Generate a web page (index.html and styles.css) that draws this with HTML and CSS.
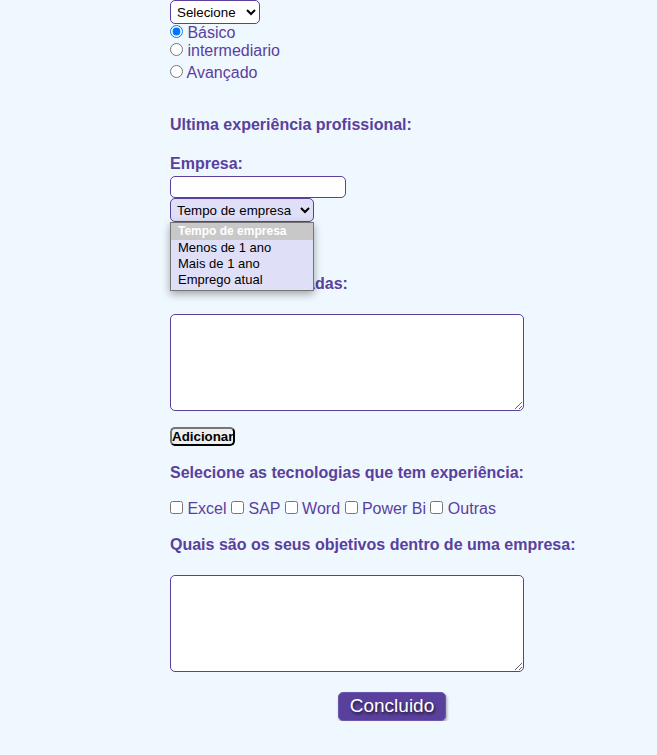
FILE: index.html
```html
<!DOCTYPE html>
<html lang="pt-BR">
<head>
<meta charset="utf-8">
<title>Cadastro</title>
<link rel="stylesheet" href="styles.css">
</head>
<body>
<form class="form">
  <select class="field select level" aria-label="Nível"><option>Selecione</option></select>
  <div class="choices">
    <label class="choice"><input type="radio" name="nivel" checked> Básico</label>
    <label class="choice"><input type="radio" name="nivel"> intermediario</label>
    <label class="choice choice-last"><input type="radio" name="nivel"> Avançado</label>
  </div>

  <h2 class="title">Ultima experiência profissional:</h2>
  <label class="title company-label" for="empresa">Empresa:</label>
  <input class="field company" id="empresa" type="text">
  <div class="dropdown">
    <select class="field select tenure" aria-label="Tempo de empresa"><option>Tempo de empresa</option></select>
    <ul class="menu">
      <li class="option selected">Tempo de empresa</li>
      <li class="option">Menos de 1 ano</li>
      <li class="option">Mais de 1 ano</li>
      <li class="option">Emprego atual</li>
    </ul>
  </div>

  <label class="title activities-label" for="atividades">Atividades executadas:</label>
  <textarea class="field area" id="atividades"></textarea>
  <button class="add" type="button">Adicionar</button>

  <h2 class="title tech-title">Selecione as tecnologias que tem experiência:</h2>
  <div class="techs">
    <label><input type="checkbox"> Excel</label>
    <label><input type="checkbox"> SAP</label>
    <label><input type="checkbox"> Word</label>
    <label><input type="checkbox"> Power Bi</label>
    <label><input type="checkbox"> Outras</label>
  </div>

  <label class="title goals-label" for="objetivos">Quais são os seus objetivos dentro de uma empresa:</label>
  <textarea class="field area" id="objetivos"></textarea>
  <button class="submit" type="button">Concluido</button>
</form>
</body>
</html>
```

FILE: styles.css
```css
* {
  box-sizing: border-box;
}

body {
  margin: 0;
  background: #f0f8ff;
  color: #5a409d;
  font-family: "Liberation Sans", Arial, sans-serif;
  font-size: 16px;
  line-height: 18px;
}

.form {
  display: flex;
  flex-direction: column;
  align-items: flex-start;
  max-width: 614px;
  padding-left: 170px;
}

.field {
  border: 1px solid #5a409d;
  border-radius: 5px;
  background: #fff;
  font-family: inherit;
}

.select {
  display: block;
  height: 24px;
  padding: 0 0 0 2px;
  color: #000;
}

.level {
  width: 90px;
}

.choices {
  display: flex;
  flex-direction: column;
}

.choice input {
  margin: 0;
}

.choice-last {
  margin-top: 4px;
}

.title {
  margin: 34px 0 0;
  font-size: 16px;
  font-weight: bold;
  line-height: 18px;
}

.company-label {
  margin: 21px 0 3px;
}

.company {
  width: 176px;
  height: 22px;
}

.dropdown {
  position: relative;
}

.tenure {
  width: 144px;
  background: #e0dff8;
}

.menu {
  position: absolute;
  top: 100%;
  left: 0;
  width: 100%;
  margin: 0;
  padding: 0 0 2px;
  border: 1px solid #767676;
  background: #e0dff8;
  box-shadow: 0 3px 8px rgba(0, 0, 0, 0.35);
  color: #000;
  font-size: 13px;
  line-height: 16px;
  list-style: none;
}

.option {
  padding-left: 7px;
}

.selected {
  background: #c8c8c8;
  color: #fff;
  font-size: 12px;
  font-weight: bold;
  line-height: 17px;
}

.activities-label {
  margin: 53px 0 21px;
}

.area {
  width: 354px;
  height: 97px;
}

.add {
  width: 65px;
  height: 19px;
  margin-top: 16px;
  padding: 0;
  border: 2px outset #767676;
  border-color: #767676 #212121 #212121 #767676;
  border-radius: 5px;
  background: #efefef;
  color: #000;
  font-family: inherit;
  font-weight: bold;
  line-height: 15px;
}

.tech-title {
  margin-top: 18px;
}

.techs {
  margin-top: 18px;
}

.techs input {
  margin: 0;
}

.goals-label {
  margin: 18px 0 21px;
}

.submit {
  align-self: center;
  width: 108px;
  height: 29px;
  margin-top: 20px;
  padding: 0 0 2px;
  border: 1px solid #6d55ad;
  border-radius: 5px;
  background: #5a409d;
  box-shadow: 1px 2px 3px rgba(0, 0, 0, 0.35);
  color: #fff;
  font: 19px/22px "Liberation Sans", Arial, sans-serif;
  text-shadow: 1px 2px 3px rgba(0, 0, 0, 0.7);
}
```
